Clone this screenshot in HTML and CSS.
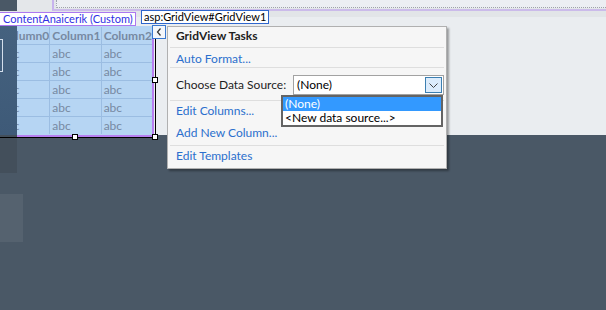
FILE: index.html
```html
<!DOCTYPE html>
<html lang="en">
<head>
    <meta charset="UTF-8">
    <title>GridView Tasks</title>
    <link rel="stylesheet" href="styles.css">
</head>
<body>
    <div class="surface">
        <div class="topbar">
            <div class="tb-dark"></div>
            <div class="tb-gap"></div>
            <div class="placeholder"><div class="placeholder-inner"></div></div>
        </div>
        <div class="label-row"></div>
        <div class="work">
            <div class="sidebar"><div class="sidebar-box"></div></div>
            <div class="grid-clip">
                <table class="grid">
                    <thead>
                        <tr><th>Column0</th><th>Column1</th><th>Column2</th></tr>
                    </thead>
                    <tbody>
                        <tr><td>abc</td><td>abc</td><td>abc</td></tr>
                        <tr><td>abc</td><td>abc</td><td>abc</td></tr>
                        <tr><td>abc</td><td>abc</td><td>abc</td></tr>
                        <tr><td>abc</td><td>abc</td><td>abc</td></tr>
                        <tr><td>abc</td><td>abc</td><td>abc</td></tr>
                    </tbody>
                </table>
            </div>
        </div>

        <span class="tag tag-content">ContentAnaicerik (Custom)</span>
        <span class="tag tag-grid">asp:GridView#GridView1</span>

        <!-- selectie rond de GridView -->
        <div class="selection"></div>
        <div class="handle handle-mid"></div>
        <div class="handle handle-bottom"></div>
        <div class="handle handle-corner"></div>

        <button class="smart-btn" type="button">
            <svg width="6" height="8" viewBox="0 0 6 8"><polyline points="4.5,0.5 1.5,4 4.5,7.5" fill="none" stroke="#333" stroke-width="1.2"/></svg>
        </button>

        <div class="tasks">
            <div class="tasks-title">GridView Tasks</div>
            <div class="sep"></div>
            <a class="task-link link-auto">Auto Format...</a>
            <div class="sep"></div>
            <div class="source-row">
                <span>Choose Data Source:</span>
                <div class="select">
                    <span>(None)</span>
                    <span class="select-btn">
                        <svg width="9" height="5" viewBox="0 0 9 5"><polyline points="0.5,0.5 4.5,4.5 8.5,0.5" fill="none" stroke="#444" stroke-width="1"/></svg>
                    </span>
                </div>
            </div>
            <div class="sep"></div>
            <a class="task-link link-cols">Edit Columns...</a>
            <a class="task-link link-add">Add New Column...</a>
            <div class="sep"></div>
            <a class="task-link link-tpl">Edit Templates</a>

            <ul class="dropdown">
                <li class="selected">(None)</li>
                <li>&lt;New data source...&gt;</li>
            </ul>
        </div>
    </div>

    <div class="lower">
        <div class="lower-dark"></div>
        <div class="lower-light"></div>
    </div>
</body>
</html>
```

FILE: styles.css
```css
* {
    box-sizing: border-box;
}

body {
    margin: 0;
    width: 606px;
    height: 310px;
    overflow: hidden;
    background-color: #4a5866;
    font-family: 'Lato', 'Noto Sans', sans-serif;
    font-size: 12px;
    color: #1e1e1e;
}

.surface {
    position: relative;
    z-index: 1;
    height: 135px;
    background: #eaedf0;
}

.topbar {
    display: flex;
    height: 11px;
}

.tb-dark {
    width: 17px;
    background: #4a5866;
}

.tb-gap {
    width: 35px;
    background: #e4e7ea;
}

.placeholder {
    flex: 1;
    background: #e3e6e9;
    border-left: 2px solid #c7b3ee;
    border-bottom: 2px solid #cbbbea;
}

.placeholder-inner {
    height: 8px;
    margin-left: 2px;
    border-left: 1px dotted #a0a4b0;
    border-bottom: 1px dotted #9ea2aa;
    background: #eceef3;
}

.label-row {
    height: 15px;
    background: linear-gradient(#e2e5e8 6px, #eaedf0 6px);
}

.work {
    display: flex;
    height: 109px;
}

.sidebar {
    width: 17px;
    background: linear-gradient(#45627f, #3e5a78);
    padding-top: 13px;
}

.sidebar-box {
    width: 8px;
    height: 33px;
    margin-left: -5px;
    border: 1px solid #d4dfec;
}

.grid-clip {
    width: 137px;
    height: 111px;
    padding-top: 1px;
    overflow: hidden;
    background: #b6d5f3;
    border-right: 2px solid #b77ff0;
    border-bottom: 2px solid #b77ff0;
}

.grid {
    margin-left: -18px;
    width: 153px;
    table-layout: fixed;
    border-collapse: separate;
    border-spacing: 0;
    color: #7689a2;
}

.grid th,
.grid td {
    box-sizing: content-box;
    width: 48px;
    height: 17px;
    padding: 0 0 0 2px;
    line-height: 17px;
    text-align: left;
    white-space: nowrap;
    overflow: hidden;
    border-right: 1px solid #9bbde2;
    border-bottom: 1px solid #9bbde2;
}

.grid th {
    font-weight: bold;
}

.grid tr :last-child {
    border-right: none;
}

.grid tbody tr:last-child td {
    border-bottom: none;
}

.tag {
    position: absolute;
    height: 14px;
    padding: 0 2px;
    font-size: 11px;
    line-height: 12px;
    background: #fff;
    white-space: nowrap;
}

.tag-content {
    left: -1px;
    top: 12px;
    padding-left: 3px;
    color: #3030e4;
    border: 1px solid #ac78f0;
}

.tag-grid {
    left: 141px;
    top: 10px;
    color: #000;
    border: 1px solid #2f66cc;
}

.selection {
    position: absolute;
    left: -5px;
    top: 38px;
    width: 161px;
    height: 100px;
    border-right: 1px solid #000;
    border-bottom: 1px solid #000;
}

.handle {
    position: absolute;
    width: 6px;
    height: 6px;
    background: #fff;
    border: 1px solid #000;
}

.handle-mid {
    left: 152px;
    top: 77px;
}

.handle-bottom {
    left: 72px;
    top: 134px;
}

.handle-corner {
    left: 152px;
    top: 134px;
}

.smart-btn {
    position: absolute;
    left: 152px;
    top: 25px;
    width: 14px;
    height: 14px;
    padding: 0;
    display: flex;
    align-items: center;
    justify-content: center;
    background: #f4f6fa;
    border: 1px solid #3a78d0;
}

.tasks {
    position: absolute;
    left: 167px;
    top: 26px;
    width: 280px;
    height: 143px;
    display: flex;
    flex-direction: column;
    background: #f6f6f6;
    border: 1px solid #b0b0b0;
    box-shadow: 2px 2px 2px rgba(0, 0, 0, 0.35);
}

.tasks-title {
    padding: 1px 8px 3px;
    line-height: 16px;
    font-weight: bold;
}

.sep {
    height: 1px;
    margin: 0 2px;
    background: #dedede;
}

.task-link {
    padding: 0 8px;
    line-height: 16px;
    color: #2b6fcd;
    cursor: pointer;
}

.link-auto {
    padding-top: 3px;
}

.link-cols {
    padding-top: 2px;
    padding-bottom: 3px;
}

.link-add {
    padding-top: 3px;
    padding-bottom: 4px;
}

.link-tpl {
    padding-top: 2px;
    padding-bottom: 4px;
}

.source-row {
    display: flex;
    align-items: center;
    justify-content: space-between;
    padding: 7px 2px 5px 8px;
    line-height: 16px;
}

.select {
    width: 151px;
    height: 20px;
    display: flex;
    align-items: center;
    justify-content: space-between;
    padding: 0 1px 0 3px;
    background: #fff;
    color: #000;
    border: 1px solid #a2a2a2;
}

.select-btn {
    width: 17px;
    height: 16px;
    display: flex;
    align-items: center;
    justify-content: center;
    background: #dcecfc;
    border: 1px solid #3c7fb1;
}

.dropdown {
    position: absolute;
    left: 113px;
    top: 68px;
    width: 162px;
    margin: 0;
    padding: 0;
    list-style: none;
    background: #fff;
    color: #000;
    border: 2px solid #646464;
}

.dropdown li {
    height: 14px;
    padding-left: 2px;
    line-height: 14px;
    white-space: nowrap;
}

.dropdown .selected {
    background: #3399ff;
    color: #fff;
}

.lower-dark {
    width: 17px;
    height: 38px;
    background: #434f5b;
}

.lower-light {
    width: 23px;
    height: 48px;
    margin-top: 21px;
    background: #55626f;
}
```
